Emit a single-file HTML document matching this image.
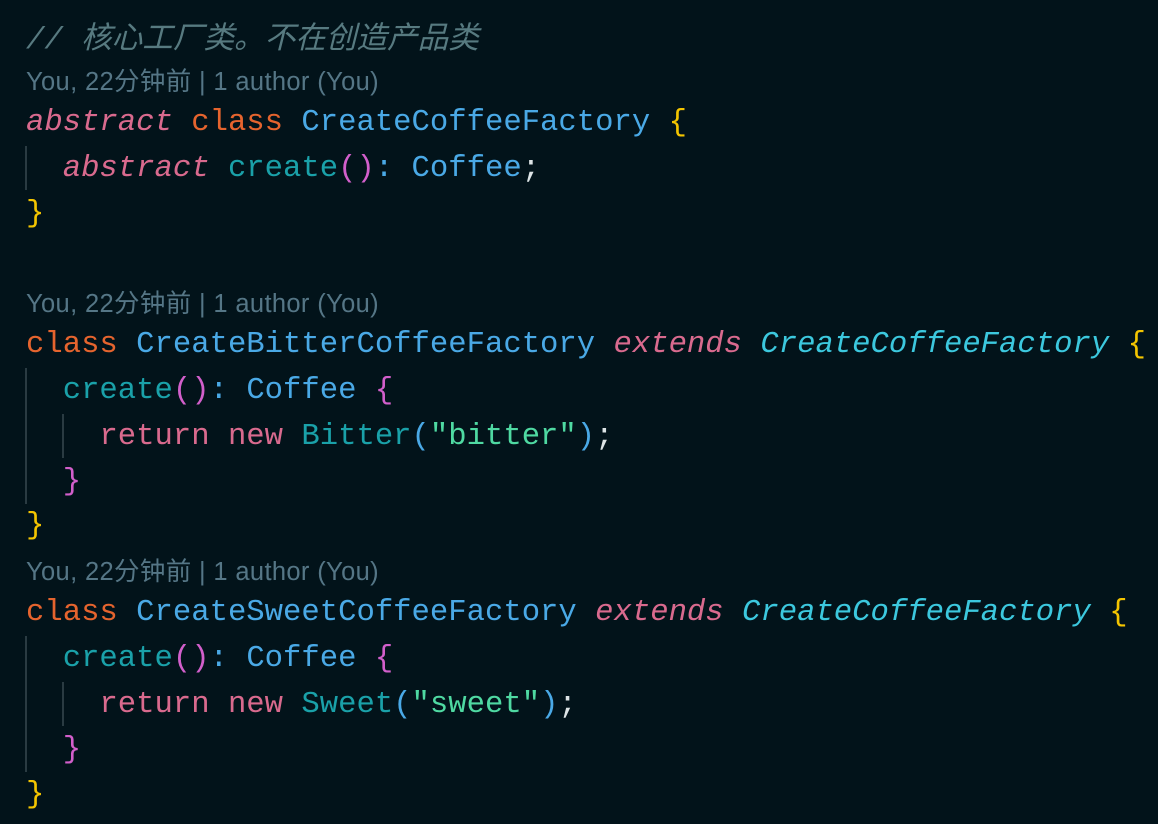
<!DOCTYPE html>
<html><head><meta charset="utf-8"><style>
body{margin:0;width:1158px;height:824px;background:#02131a;overflow:hidden;position:relative}
.l{position:absolute;left:26px;white-space:pre;font-family:"Liberation Mono","Noto Sans CJK SC",monospace;font-size:30.6px;line-height:46px;color:#c8d0d4}
.b{position:absolute;left:26px;white-space:pre;font-family:"Liberation Sans","Noto Sans CJK SC",sans-serif;font-size:25.5px;line-height:32px;color:#557686;letter-spacing:0.35px}
.g{position:absolute;width:2px;background:#2a3b42}
.c{color:#577a80;font-style:italic}
.k{color:#d96a8e;font-style:italic}
.o{color:#e5642e}
.t{color:#4aa9e6}
.m{color:#1aa1a9}
.p{color:#d25fcb}
.y{color:#f4c500}
.r{color:#d96a8e}
.s{color:#4fd9a2}
.e{color:#3cc8de;font-style:italic}
.w{color:#dde4e6}
</style></head><body>
<div class="l c" style="top:18px">// 核心工厂类。不在创造产品类</div>
<div class="b" style="top:66px">You, 22分钟前 | 1 author (You)</div>
<div class="l" style="top:100px"><span class="k">abstract</span> <span class="o">class</span> <span class="t">CreateCoffeeFactory</span> <span class="y">{</span></div>
<div class="g" style="left:25px;top:146px;height:44px"></div>
<div class="l" style="top:146px">  <span class="k">abstract</span> <span class="m">create</span><span class="p">()</span><span class="t">:</span> <span class="t">Coffee</span><span class="w">;</span></div>
<div class="l" style="top:191px"><span class="y">}</span></div>
<div class="b" style="top:288px">You, 22分钟前 | 1 author (You)</div>
<div class="l" style="top:322px"><span class="o">class</span> <span class="t">CreateBitterCoffeeFactory</span> <span class="k">extends</span> <span class="e">CreateCoffeeFactory</span> <span class="y">{</span></div>
<div class="g" style="left:25px;top:368px;height:136px"></div>
<div class="g" style="left:62px;top:414px;height:44px"></div>
<div class="l" style="top:368px">  <span class="m">create</span><span class="p">()</span><span class="t">:</span> <span class="t">Coffee</span> <span class="p">{</span></div>
<div class="l" style="top:414px">    <span class="r">return</span> <span class="r">new</span> <span class="m">Bitter</span><span class="t">(</span><span class="s">"bitter"</span><span class="t">)</span><span class="w">;</span></div>
<div class="l" style="top:459px">  <span class="p">}</span></div>
<div class="l" style="top:503px"><span class="y">}</span></div>
<div class="b" style="top:556px">You, 22分钟前 | 1 author (You)</div>
<div class="l" style="top:590px"><span class="o">class</span> <span class="t">CreateSweetCoffeeFactory</span> <span class="k">extends</span> <span class="e">CreateCoffeeFactory</span> <span class="y">{</span></div>
<div class="g" style="left:25px;top:636px;height:136px"></div>
<div class="g" style="left:62px;top:682px;height:44px"></div>
<div class="l" style="top:636px">  <span class="m">create</span><span class="p">()</span><span class="t">:</span> <span class="t">Coffee</span> <span class="p">{</span></div>
<div class="l" style="top:682px">    <span class="r">return</span> <span class="r">new</span> <span class="m">Sweet</span><span class="t">(</span><span class="s">"sweet"</span><span class="t">)</span><span class="w">;</span></div>
<div class="l" style="top:727px">  <span class="p">}</span></div>
<div class="l" style="top:772px"><span class="y">}</span></div>
</body></html>
